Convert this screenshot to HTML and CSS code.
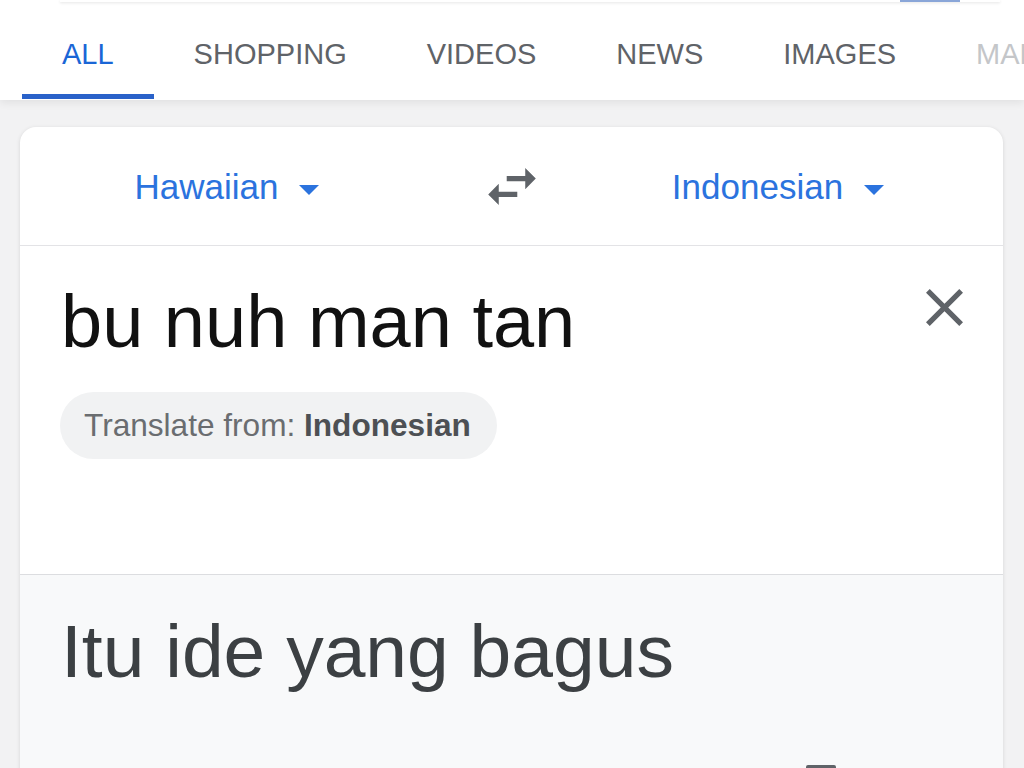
FILE: index.html
```html
<!DOCTYPE html>
<html lang="en">
<head>
  <meta charset="UTF-8">
  <title>Translate</title>
  <meta name="viewport" content="width=device-width, initial-scale=1">
  <link rel="stylesheet" href="styles.css">
</head>
<body>
  <header class="topbar">
    <div class="search-edge"><span class="search-btn"></span></div>
    <nav class="tabs">
      <a class="tab active">ALL</a>
      <a class="tab">SHOPPING</a>
      <a class="tab">VIDEOS</a>
      <a class="tab">NEWS</a>
      <a class="tab">IMAGES</a>
      <a class="tab fade">MAPS</a>
    </nav>
  </header>

  <main class="translate-card">
    <div class="lang-row">
      <button class="lang">Hawaiian<span class="caret"></span></button>
      <button class="swap">
        <svg width="48" height="37" viewBox="3 5 18 14"><path d="M6.99 11L3 15l3.99 4v-3H14v-2H6.99v-3zM21 9l-3.99-4v3H10v2h7.01v3L21 9z"/></svg>
      </button>
      <button class="lang">Indonesian<span class="caret"></span></button>
    </div>

    <section class="source">
      <div class="source-top">
        <div class="source-text">bu nuh man tan</div>
        <button class="clear">
          <svg width="37" height="37" viewBox="5 5 14 14"><path d="M19 6.41L17.59 5 12 10.59 6.41 5 5 6.41 10.59 12 5 17.59 6.41 19 12 13.41 17.59 19 19 17.59 13.41 12z"/></svg>
        </button>
      </div>
      <div class="detect-chip">Translate from: <b>Indonesian</b></div>
    </section>

    <section class="result">
      <div class="result-text">Itu ide yang bagus</div>
      <div class="result-actions"><span class="copy-icon"></span></div>
    </section>
  </main>
</body>
</html>
```

FILE: styles.css
```css
body {
  margin: 0;
  background: #f2f2f3;
  font-family: "Liberation Sans", Arial, sans-serif;
  overflow: hidden;
}
button {
  font-family: inherit;
  background: none;
  border: none;
  padding: 0;
  cursor: pointer;
}
.topbar {
  background: #fff;
  height: 100px;
  box-shadow: 0 3px 8px rgba(0,0,0,0.07);
}
.search-edge {
  height: 2px;
  margin: 0 24px 0 60px;
  background: #fff;
  box-shadow: 0 1px 3px rgba(0,0,0,0.12);
  display: flex;
  justify-content: flex-end;
}
.search-btn {
  width: 60px;
  height: 2px;
  margin-right: 40px;
  background: #8aa6d8;
}
.tabs {
  display: flex;
  padding-left: 22px;
  white-space: nowrap;
  overflow: hidden;
}
.tab {
  font-size: 29px;
  line-height: 34px;
  color: #5f6368;
  padding: 35px 40px 23px;
  border-bottom: 5px solid transparent;
}
.tab.active {
  color: #1a66d6;
  border-bottom-color: #2a62c9;
}
.tab.fade {
  color: #c4c6c9;
}
.translate-card {
  margin: 27px 0 0 20px;
  width: 983px;
  background: #fff;
  border-radius: 16px;
  box-shadow: 0 1px 4px rgba(0,0,0,0.12);
  overflow: hidden;
}
.lang-row {
  display: grid;
  grid-template-columns: 414px 156px 376px;
  align-items: center;
  height: 118px;
  border-bottom: 1px solid #e3e3e6;
}
.lang {
  justify-self: center;
  display: flex;
  align-items: center;
  font-size: 35px;
  color: #2b73de;
  margin-top: 2px;
}
.caret {
  margin-left: 21px;
  margin-top: 5px;
  border-left: 10px solid transparent;
  border-right: 10px solid transparent;
  border-top: 10px solid #2b73de;
}
.swap {
  justify-self: center;
  display: flex;
  fill: #5f6368;
}
.source {
  height: 329px;
  box-sizing: border-box;
  padding: 33px 40px 0 41px;
  border-bottom: 1px solid #dcdde0;
}
.source-top {
  display: flex;
  justify-content: space-between;
  align-items: flex-start;
}
.source-text {
  font-size: 74px;
  color: #111;
}
.clear {
  margin-top: 10px;
  display: flex;
  fill: #5f6368;
}
.detect-chip {
  display: inline-flex;
  align-items: center;
  height: 67px;
  margin: 28px 0 0 -1px;
  padding: 0 26px 0 24px;
  border-radius: 34px;
  background: #f1f2f3;
  font-size: 31.6px;
  color: #6a6d70;
  white-space: pre;
}
.detect-chip b {
  color: #4d5054;
}
.result {
  background: #f8f9fa;
  padding: 33px 40px 0 41px;
  height: 200px;
}
.result-text {
  font-size: 75px;
  color: #3c4043;
}
.result-actions {
  display: flex;
  justify-content: flex-end;
  margin-top: 71px;
  padding-right: 127px;
}
.copy-icon {
  width: 24px;
  height: 30px;
  border: 3px solid #5f6368;
  border-radius: 2px;
}
```
